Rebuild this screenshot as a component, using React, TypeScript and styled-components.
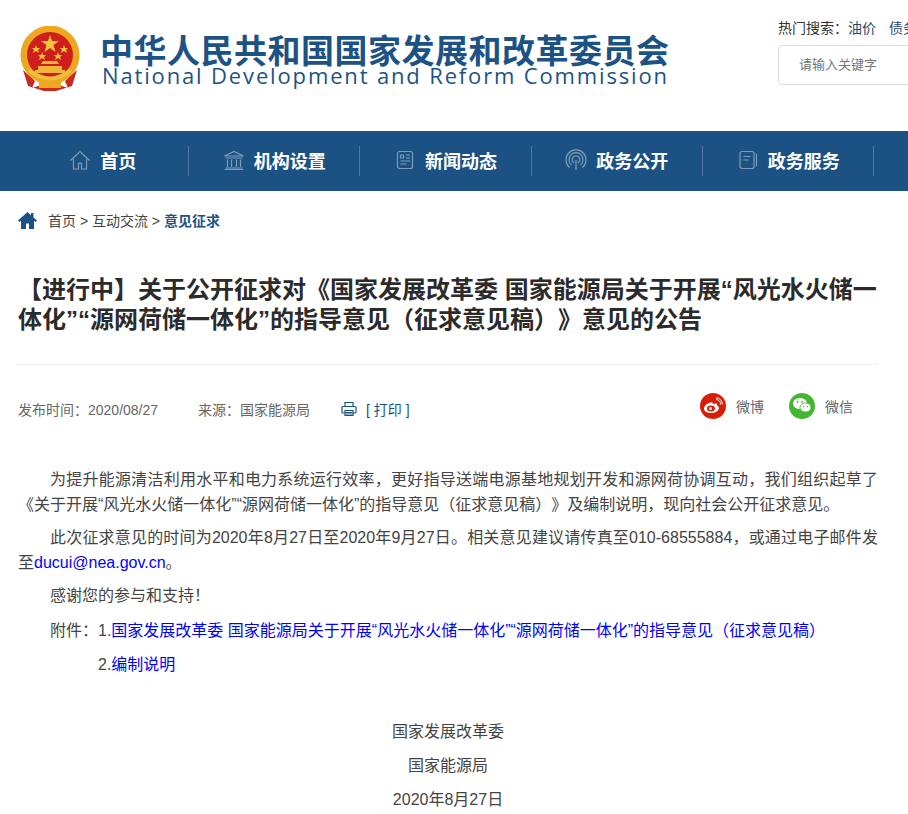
import React from "react";
import styled, { createGlobalStyle } from "styled-components";

const CJK = `"Noto Sans CJK SC", "Liberation Sans", sans-serif`;
const BODY = `"Liberation Sans", "Noto Sans CJK SC", sans-serif`;

const Global = createGlobalStyle`
  html, body { margin: 0; padding: 0; background: #fff; overflow-x: hidden; }
  body { font-family: ${BODY}; color: #333; text-spacing-trim: space-all; }
  a { text-decoration: none; color: inherit; }
`;

const Page = styled.div`
  width: 908px;
  height: 814px;
  overflow: hidden;
`;

const Header = styled.header`
  height: 131px;
  display: flex;
  justify-content: space-between;
  padding-left: 19px;
  box-sizing: border-box;
`;

const Brand = styled.div`
  display: flex;
  gap: 17px;
  padding-top: 26px;
  height: 70px;
`;

const BrandText = styled.div`
  display: flex;
  flex-direction: column;
  color: #1d5384;
  width: 570px;
  padding-top: 5px;
`;

const BrandCn = styled.div`
  font-family: ${CJK};
  font-weight: 700;
  font-size: 33px;
  letter-spacing: 0.5px;
  line-height: 36px;
  white-space: nowrap;
`;

const BrandEn = styled.div`
  font-family: "Open Sans", sans-serif;
  font-size: 22px;
  letter-spacing: 1.85px;
  line-height: 17px;
  padding-left: 2px;
  white-space: nowrap;
`;

const SearchArea = styled.div`
  width: 130px;
  padding-top: 20px;
  overflow: hidden;
  flex: none;
`;

const HotRow = styled.div`
  font-size: 14px;
  color: #333;
  line-height: 16px;
  white-space: nowrap;
  display: flex;
  gap: 13px;
`;

const HotLink = styled.a`
  color: #2b4a6b;
`;

const SearchBox = styled.div`
  margin-top: 9px;
  width: 200px;
  height: 40px;
  box-sizing: border-box;
  border: 1px solid #dcdcdc;
  border-radius: 4px;
  padding-left: 20px;
  font-size: 13px;
  line-height: 38px;
  color: #777;
`;

const Nav = styled.nav`
  height: 60px;
  background: #1c5283;
  display: flex;
  align-items: center;
  padding-left: 17.7px;
`;

const NavItem = styled.a`
  width: 171.33px;
  height: 30px;
  box-sizing: border-box;
  flex: none;
  border-right: 1px solid #50799f;
  display: flex;
  align-items: center;
  justify-content: center;
  gap: 9px;
  color: #fff;
  font-family: ${CJK};
  font-weight: 700;
  font-size: 18px;
  line-height: 26px;
  padding-bottom: 2px;
`;

const NavIcon = styled.svg`
  width: 22px;
  height: 22px;
  fill: none;
  stroke: #7e9cb8;
  stroke-width: 1.2;
  flex: none;
`;

const Main = styled.main`
  padding: 0 30px 0 18px;
`;

const Crumbs = styled.div`
  display: flex;
  align-items: center;
  height: 60px;
  box-sizing: border-box;
  padding-bottom: 2px;
  font-size: 14px;
  color: #444;
  white-space: nowrap;
`;

const CrumbIcon = styled.svg`
  width: 19px;
  height: 18px;
  fill: #1c5283;
  margin-right: 11px;
  flex: none;
`;

const CrumbNow = styled.span`
  color: #1c5283;
  font-weight: 700;
`;

const Title = styled.h1`
  margin: 24px 0 0;
  font-family: ${BODY};
  font-weight: 700;
  font-size: 24px;
  line-height: 30px;
  color: #2b2b2b;
  padding-bottom: 29px;
  border-bottom: 1px dotted #ddd;
`;

const Meta = styled.div`
  display: flex;
  align-items: center;
  height: 102px;
  box-sizing: border-box;
  padding-bottom: 14px;
  font-size: 14px;
  color: #666;
  white-space: nowrap;
`;

const MetaItem = styled.span`
  margin-right: 40px;
`;

const PrintIcon = styled.svg`
  width: 16px;
  height: 16px;
  fill: none;
  stroke: #1c5283;
  stroke-width: 1.2;
  margin-right: 9px;
  margin-left: -9px;
  flex: none;
`;

const PrintLink = styled.a`
  color: #1c5283;
  font-size: 14px;
`;

const Share = styled.div`
  margin-left: auto;
  margin-right: 25px;
  display: flex;
  align-items: center;
  gap: 25px;
  margin-top: -7px;
`;

const ShareItem = styled.a`
  display: flex;
  align-items: center;
  gap: 10px;
  color: #666;
  font-size: 14px;
`;

const Round = styled.span<{ $bg: string }>`
  width: 26px;
  height: 26px;
  border-radius: 50%;
  background: ${(p) => p.$bg};
  display: flex;
  align-items: center;
  justify-content: center;
`;

const Article = styled.article`
  font-size: 16px;
  color: #444;
`;

const Para = styled.p`
  margin: 0 0 8px;
  line-height: 25px;
  text-indent: 32px;
  text-align: justify;
`;

const Plain = styled.p<{ $center?: boolean; $pad?: number; $top?: number }>`
  margin: ${(p) => p.$top ?? 0}px 0 0;
  line-height: 34px;
  padding-left: ${(p) => p.$pad ?? 0}px;
  text-align: ${(p) => (p.$center ? "center" : "left")};
  white-space: nowrap;
`;

const Blue = styled.a`
  color: #0000ff;
`;

const Emblem = () => (
  <svg width="64" height="66" viewBox="0 0 64 66">
    <circle cx="31" cy="29" r="29.5" fill="#eda81f" />
    <circle cx="31" cy="29" r="23" fill="#cf1f1c" />
    <path d="M4 44 L16 55 L13 62 L25 58 L37 58 L49 62 L46 55 L58 44 L53 60 L37 65 L25 65 L9 60 Z" fill="#c8281f" />
    <rect x="20" y="54" width="22" height="8" fill="#eda81f" />
    <path d="M16 44 H46 V47 H16 Z M19 40 H43 V44 H19 Z M24 35 H38 L40 38 H22 Z" fill="#f0b53a" />
    <path d="M11 42 Q31 59 51 42 L53 46 Q31 63 9 46 Z" fill="#f1bd3b" />
    <polygon points="31,9 33,15 40,15 34.500,19 36.500,26 31,22 25.500,26 27.500,19 22,15 29,15" fill="#f6c63a" />
    <polygon points="17,19 18,22 21,22 19,24 20,27 17,25 14,27 15,24 13,22 16,22" fill="#f6c63a" />
    <polygon points="45,19 46,22 49,22 47,24 48,27 45,25 42,27 43,24 41,22 44,22" fill="#f6c63a" />
    <polygon points="23,26 24,29 27,29 25,31 26,34 23,32 20,34 21,31 19,29 22,29" fill="#f6c63a" />
    <polygon points="39,26 40,29 43,29 41,31 42,34 39,32 36,34 37,31 35,29 38,29" fill="#f6c63a" />
  </svg>
);

const navItems: { label: string; icon: React.ReactNode }[] = [
  {
    label: "首页",
    icon: <path d="M1.500 11.500 11 2.500l9.500 9M4.500 10v10h5v-6h3v6h5V10" />,
  },
  {
    label: "机构设置",
    icon: <path d="M1.500 7 11 2.500 20.500 7zM2.500 9h17M4.500 10.500V18M8.500 10.500V18M13.500 10.500V18M17.500 10.500V18M2.500 19h17M1.500 20.500h19" />,
  },
  {
    label: "新闻动态",
    icon: (
      <>
        <rect x="3.500" y="2.500" width="15" height="17" rx="2" />
        <path d="M6.500 6h3v3h-3zM12 6h4M12 9h4M6.500 12h9.500M6.500 15h6" />
      </>
    ),
  },
  {
    label: "政务公开",
    icon: <path d="M11 11v10M9.200 14a3.800 3.800 0 1 1 3.600 0M6.500 16a7 7 0 1 1 9 0M4.500 18.500a10 10 0 1 1 13 0" />,
  },
  {
    label: "政务服务",
    icon: (
      <>
        <rect x="3" y="2.500" width="14" height="17" rx="2" />
        <path d="M6.500 7.500h7M6.500 11h5M19.500 4.500v13" />
      </>
    ),
  },
];

export default function App() {
  return (
    <Page>
      <Global />
      <Header>
        <Brand>
          <Emblem />
          <BrandText>
            <BrandCn>中华人民共和国国家发展和改革委员会</BrandCn>
            <BrandEn>National Development and Reform Commission</BrandEn>
          </BrandText>
        </Brand>
        <SearchArea>
          <HotRow>
            <span>
              热门搜索：<HotLink>油价</HotLink>
            </span>
            <HotLink>债务</HotLink>
          </HotRow>
          <SearchBox>请输入关键字</SearchBox>
        </SearchArea>
      </Header>
      <Nav>
        {navItems.map((n) => (
          <NavItem key={n.label}>
            <NavIcon viewBox="0 0 22 22">{n.icon}</NavIcon>
            {n.label}
          </NavItem>
        ))}
      </Nav>
      <Main>
        <Crumbs>
          <CrumbIcon viewBox="0 0 19 18">
            <path d="M9.500 1 0 9.500l1.500 1.500L3 9.800V18h5v-5.500h3V18h5V9.800l1.500 1.200L19 9.500 15.500 6.400V2h-2.500v2.200z" />
          </CrumbIcon>
          首页 &gt; 互动交流 &gt;&nbsp;<CrumbNow>意见征求</CrumbNow>
        </Crumbs>
        <Title>【进行中】关于公开征求对《国家发展改革委 国家能源局关于开展“风光水火储一体化”“源网荷储一体化”的指导意见（征求意见稿）》意见的公告</Title>
        <Meta>
          <MetaItem>发布时间：2020/08/27</MetaItem>
          <MetaItem>来源：国家能源局</MetaItem>
          <PrintIcon viewBox="0 0 16 16">
            <path d="M4 5.500V1.500h8v4M4 12H2a1 1 0 0 1-1-1V6.500a1 1 0 0 1 1-1h12a1 1 0 0 1 1 1V11a1 1 0 0 1-1 1h-2M4 9.500h8v5H4z" />
            <path d="M4.500 11.500h7M4.500 13h7" strokeWidth="1" />
          </PrintIcon>
          <PrintLink>[ 打印 ]</PrintLink>
          <Share>
            <ShareItem>
              <Round $bg="#d81e06">
                <svg width="20" height="18" viewBox="0 0 20 18">
                  <path d="M8 5.500C4 6 1 9 1 11.500 1 14.500 4.500 16 8 16s8-2 8-5c0-2-2-2.500-2-3 .3-1.500-1-2-4-1-.5-1.700-1-1.800-2-1.500z" fill="#fff" />
                  <ellipse cx="8" cy="11.500" rx="4" ry="3" fill="#d81e06" />
                  <circle cx="7.500" cy="11.500" r="1.500" fill="#fff" />
                  <path d="M13 2.500a4.500 4.500 0 0 1 4.500 5M13 0.800a6.200 6.200 0 0 1 6.300 6.700" stroke="#fff" strokeWidth="1" fill="none" />
                </svg>
              </Round>
              微博
            </ShareItem>
            <ShareItem>
              <Round $bg="#43b72f">
                <svg width="20" height="17" viewBox="0 0 20 17">
                  <ellipse cx="8" cy="6.500" rx="7" ry="5.500" fill="#fff" />
                  <ellipse cx="13.500" cy="10.500" rx="5.500" ry="4.500" fill="#fff" stroke="#43b72f" strokeWidth="0.800" />
                  <circle cx="5.500" cy="5" r="0.900" fill="#43b72f" />
                  <circle cx="10" cy="5" r="0.900" fill="#43b72f" />
                  <circle cx="11.500" cy="9.500" r="0.700" fill="#43b72f" />
                  <circle cx="15.500" cy="9.500" r="0.700" fill="#43b72f" />
                </svg>
              </Round>
              微信
            </ShareItem>
          </Share>
        </Meta>
        <Article>
          <Para>为提升能源清洁利用水平和电力系统运行效率，更好指导送端电源基地规划开发和源网荷协调互动，我们组织起草了《关于开展“风光水火储一体化”“源网荷储一体化”的指导意见（征求意见稿）》及编制说明，现向社会公开征求意见。</Para>
          <Para>此次征求意见的时间为2020年8月27日至2020年9月27日。相关意见建议请传真至010-68555884，或通过电子邮件发至<Blue>ducui@nea.gov.cn</Blue>。</Para>
          <Para>感谢您的参与和支持！</Para>
          <Plain $pad={32} $top={-2}>
            附件：1.
            <Blue>国家发展改革委 国家能源局关于开展“风光水火储一体化”“源网荷储一体化”的指导意见（征求意见稿）</Blue>
          </Plain>
          <Plain $pad={80}>
            2.
            <Blue>编制说明</Blue>
          </Plain>
          <Plain $center $top={33}>国家发展改革委</Plain>
          <Plain $center>国家能源局</Plain>
          <Plain $center>2020年8月27日</Plain>
        </Article>
      </Main>
    </Page>
  );
}
